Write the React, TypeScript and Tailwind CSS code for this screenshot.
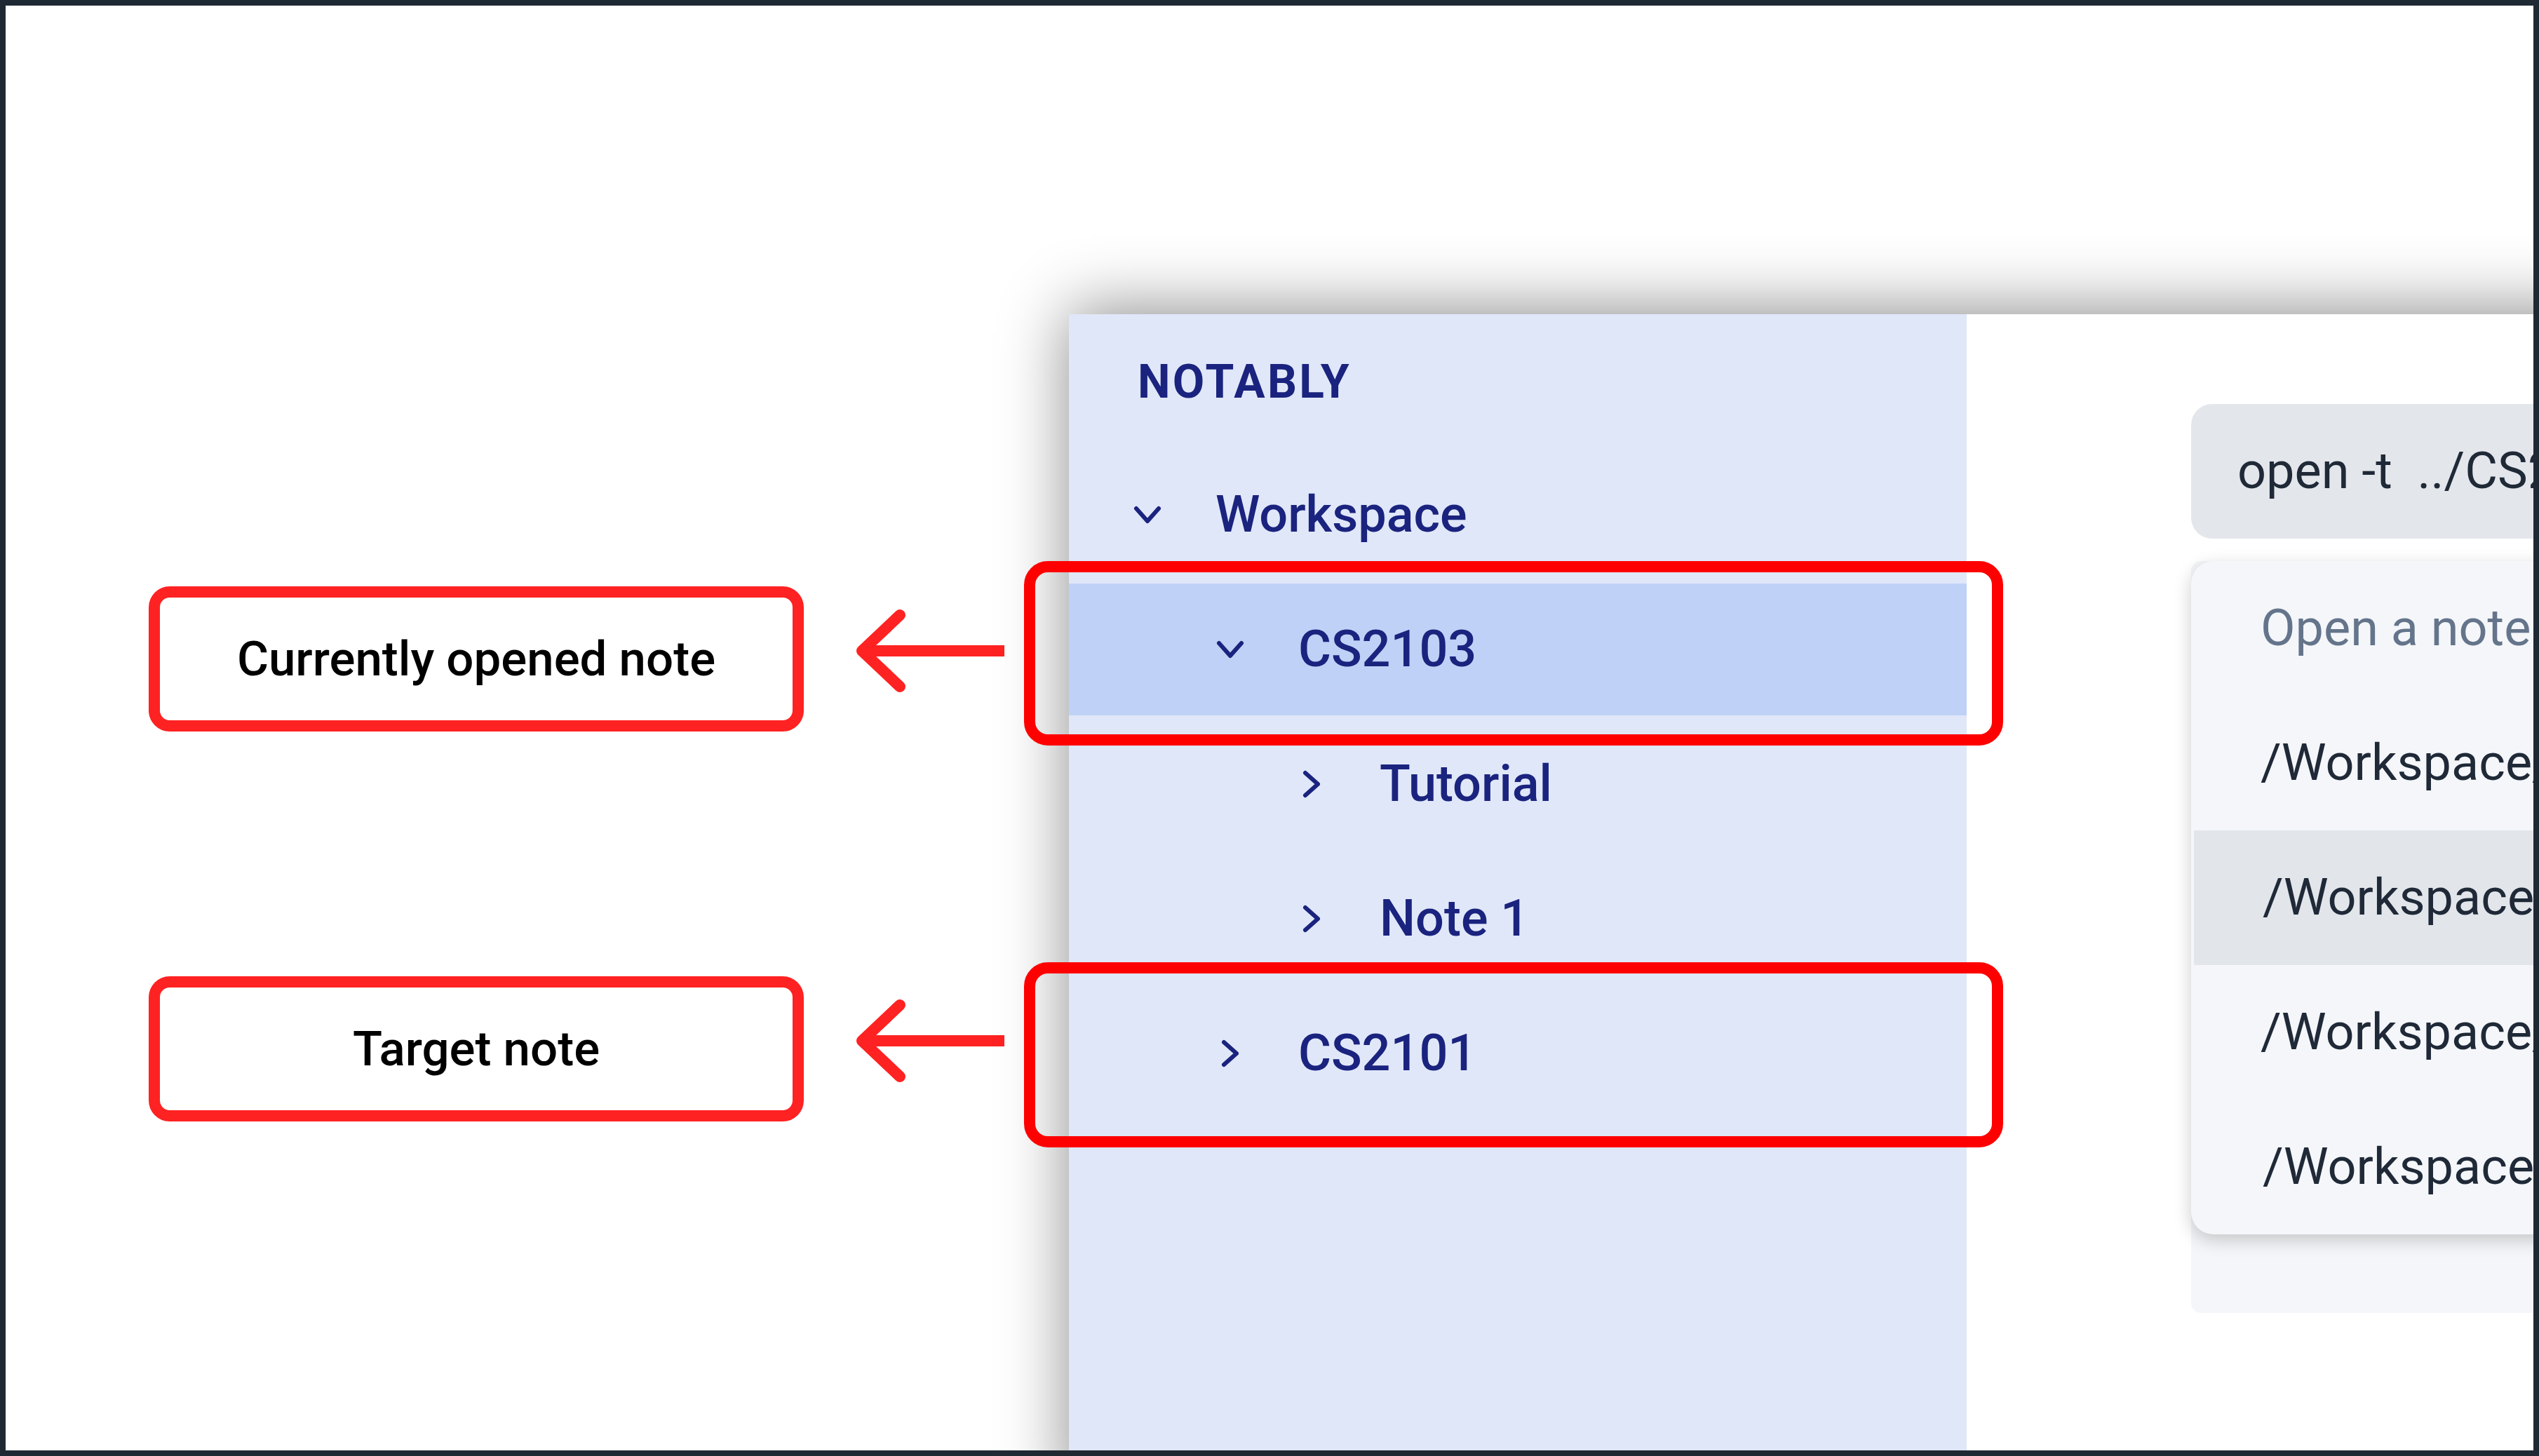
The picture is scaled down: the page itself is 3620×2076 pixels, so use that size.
import React from "react";

const navy = "text-[#1a237e]";

function Chevron({ open }: { open: boolean }) {
  return (
    <svg width="48" height="48" viewBox="0 0 48 48" fill="none" className="shrink-0">
      <path
        d={open ? "M8 15 L24 33 L40 15" : "M15 8 L33 24 L15 40"}
        stroke="#1a237e"
        strokeWidth="6"
        strokeLinecap="round"
        strokeLinejoin="round"
      />
    </svg>
  );
}

function Arrow() {
  return (
    <svg width="212" height="120" viewBox="0 0 212 120" fill="none" className="ml-[74px] mt-[32px] shrink-0">
      <path d="M9 60 H212" stroke="#ff2222" strokeWidth="16" />
      <path d="M63 9 L9 60 L63 111" stroke="#ff2222" strokeWidth="16" strokeLinecap="round" strokeLinejoin="round" />
    </svg>
  );
}

function Callout({ text, className }: { text: string; className?: string }) {
  return (
    <div className={"flex items-start " + (className ?? "")}>
      <div className="ml-[204px] w-[934px] h-[207px] shrink-0 border-[16px] border-[#ff2222] rounded-[30px] flex items-center justify-center text-[69px] font-medium text-black">
        {text}
      </div>
      <Arrow />
    </div>
  );
}

const indent = ["pl-[88px]", "pl-[206px]", "pl-[322px]"];

type RowProps = {
  label: string;
  level: number;
  open?: boolean;
  active?: boolean;
  mark?: string;
};

function TreeRow({ label, level, open = false, active = false, mark }: RowProps) {
  return (
    <div className={"relative h-[188px] mb-[4px] flex items-center " + indent[level] + (active ? " bg-[#bfd1f6]" : "")}>
      <Chevron open={open} />
      <span className={"ml-[73px] text-[72px] font-medium " + navy}>{label}</span>
      {mark && <div className={"absolute -left-[64px] -right-[52px] border-[16px] border-[#ff0000] rounded-[34px] " + mark} />}
    </div>
  );
}

const items = [
  { path: "/Workspace/CS2103", pad: "pl-[95px]" },
  { path: "/Workspace/CS2101", pad: "pl-[98px]", active: true },
  { path: "/Workspace/CS2103/Tutorial", pad: "pl-[95px]" },
  { path: "/Workspace/CS2103/Note 1", pad: "pl-[98px]" },
];

export default function App() {
  return (
    <div className="w-[3620px] h-[2076px] border-8 border-[#1f2933] bg-white overflow-hidden flex font-['Roboto','Liberation_Sans',sans-serif]">
      <div className="w-[1516px] shrink-0 flex flex-col pt-[828px]">
        <Callout text="Currently opened note" />
        <Callout text="Target note" className="mt-[349px]" />
      </div>

      <div className="mt-[440px] w-[2700px] h-[1700px] shrink-0 flex shadow-[0_-6px_90px_rgba(0,0,0,0.45)]">
        <aside className="w-[1280px] shrink-0 bg-[#e0e7f9] flex flex-col">
          <div className={"h-[192px] flex items-center pl-[98px] text-[66px] font-bold tracking-[0.05em] " + navy}>NOTABLY</div>
          <TreeRow label="Workspace" level={0} open />
          <TreeRow label="CS2103" level={1} open active mark="-top-[32px] -bottom-[43px]" />
          <TreeRow label="Tutorial" level={2} />
          <TreeRow label="Note 1" level={2} />
          <TreeRow label="CS2101" level={1} mark="-top-[36px] -bottom-[40px]" />
        </aside>

        <main className="flex-1 bg-white pl-[320px] pt-[128px]">
          <div className="h-[192px] rounded-[30px] bg-[#e3e7eb] flex items-center pl-[66px] text-[72px] text-[#1f2937] whitespace-pre">
            open -t  ../CS2101
          </div>
          <div className="relative mt-[32px] h-[1072px] rounded-[14px] bg-[#f4f6f9]">
            <div className="absolute inset-x-0 top-0 h-[960px] rounded-[32px] bg-[#f4f6f9] shadow-[0_8px_26px_rgba(0,0,0,0.2)] overflow-hidden flex flex-col">
              <div className="h-[192px] shrink-0 flex items-center pl-[99px] text-[72px] text-[#64748b]">Open a note</div>
              {items.map((it) => (
                <div
                  key={it.path}
                  className={"h-[192px] shrink-0 mx-[4px] flex items-center text-[72px] text-[#1f2937] whitespace-nowrap " + it.pad + (it.active ? " bg-[#e2e6eb]" : "")}
                >
                  {it.path}
                </div>
              ))}
            </div>
          </div>
        </main>
      </div>
    </div>
  );
}
